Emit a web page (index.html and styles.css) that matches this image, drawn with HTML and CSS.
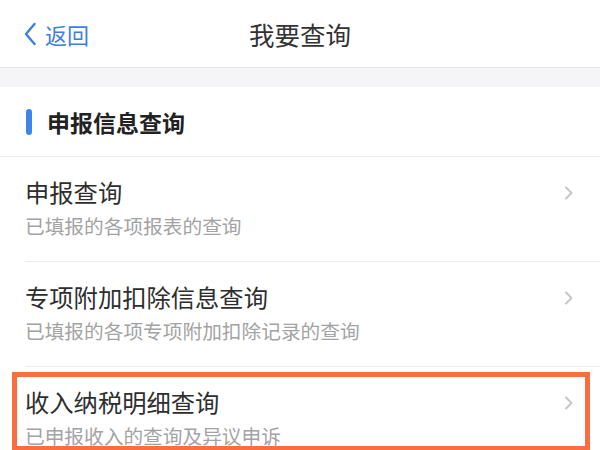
FILE: index.html
```html
<!DOCTYPE html>
<html lang="zh-CN">
<head>
<meta charset="utf-8">
<title>我要查询</title>
<link rel="stylesheet" href="styles.css">
</head>
<body>
<div class="page">
  <header class="topbar">
    <div class="back">
      <svg class="back-icon" width="12" height="24" viewBox="0 0 12 24"><path d="M10.5 2 L2 12 L10.5 22" fill="none" stroke="#3d7fe0" stroke-width="2.4" stroke-linecap="round" stroke-linejoin="round"/></svg>
      <span class="back-text">返回</span>
    </div>
    <div class="title">我要查询</div>
    <div></div>
  </header>
  <div class="gap-band"></div>
  <div class="section-head">
    <span class="bar"></span>
    <span class="section-title">申报信息查询</span>
  </div>
  <ul class="list">
    <li class="item">
      <div class="texts">
        <div class="item-title">申报查询</div>
        <div class="item-sub">已填报的各项报表的查询</div>
      </div>
      <svg class="chev" width="10" height="14" viewBox="0 0 10 14"><path d="M2 1.5 L7.5 7 L2 12.5" fill="none" stroke="#c6c6c8" stroke-width="2" stroke-linecap="round" stroke-linejoin="round"/></svg>
    </li>
    <li class="item">
      <div class="texts">
        <div class="item-title">专项附加扣除信息查询</div>
        <div class="item-sub">已填报的各项专项附加扣除记录的查询</div>
      </div>
      <svg class="chev" width="10" height="14" viewBox="0 0 10 14"><path d="M2 1.5 L7.5 7 L2 12.5" fill="none" stroke="#c6c6c8" stroke-width="2" stroke-linecap="round" stroke-linejoin="round"/></svg>
    </li>
    <li class="item highlighted">
      <div class="texts">
        <div class="item-title">收入纳税明细查询</div>
        <div class="item-sub">已申报收入的查询及异议申诉</div>
      </div>
      <svg class="chev" width="10" height="14" viewBox="0 0 10 14"><path d="M2 1.5 L7.5 7 L2 12.5" fill="none" stroke="#c6c6c8" stroke-width="2" stroke-linecap="round" stroke-linejoin="round"/></svg>
      <span class="mark"></span>
    </li>
  </ul>
</div>
</body>
</html>
```
FILE: styles.css
```css
* { box-sizing: border-box; }
html, body {
  margin: 0;
  padding: 0;
  background: #ffffff;
}
body {
  font-family: "Noto Sans CJK SC", "Noto Sans", sans-serif;
  color: #333333;
  width: 600px;
  height: 450px;
  overflow: hidden;
}
.page {
  width: 600px;
}
.topbar {
  height: 68px;
  display: grid;
  grid-template-columns: 1fr auto 1fr;
  align-items: center;
  border-bottom: 1px solid #e8e8ea;
  background: #ffffff;
}
.back {
  display: flex;
  align-items: center;
  padding-left: 24px;
  gap: 9px;
}
.back-icon { display: block; }
.back-text {
  font-size: 22px;
  line-height: 30px;
  color: #3d7fe0;
}
.title {
  font-size: 25.5px;
  line-height: 32px;
  color: #333333;
  padding-top: 1px;
}
.gap-band {
  height: 19px;
  background: #f5f5f7;
}
.section-head {
  height: 70px;
  display: flex;
  align-items: center;
  padding-left: 26px;
  gap: 15px;
  border-bottom: 1px solid #ececee;
}
.bar {
  width: 6px;
  height: 26px;
  border-radius: 3px;
  background: #3f84ee;
}
.section-title {
  font-size: 23px;
  font-weight: bold;
  line-height: 30px;
  color: #222222;
}
.list {
  list-style: none;
  margin: 0;
  padding: 0 0 0 25px;
}
.item {
  position: relative;
  display: flex;
  align-items: flex-start;
  justify-content: space-between;
  padding: 20px 26px 22px 0;
  border-bottom: 1px solid #ececee;
  height: 105px;
}
.texts {
  display: flex;
  flex-direction: column;
  gap: 6px;
}
.item-title {
  font-size: 24.3px;
  line-height: 30px;
  color: #2e2e2e;
}
.item-sub {
  font-size: 19.7px;
  line-height: 26px;
  color: #a3a3a3;
}
.chev {
  display: block;
  margin-top: 9px;
}
.highlighted {
  border-bottom: none;
}
.mark {
  position: absolute;
  left: -13px;
  top: 5px;
  width: 578px;
  height: 79px;
  border: 5px solid #f86e40;
  pointer-events: none;
}
```
